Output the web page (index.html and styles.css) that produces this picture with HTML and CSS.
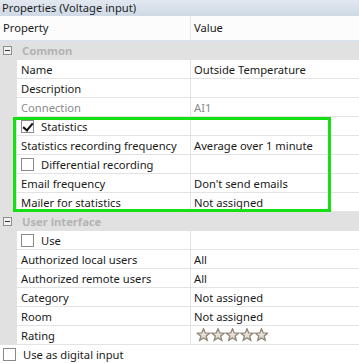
FILE: index.html
```
<!DOCTYPE html>
<html lang="en">

<head>
    <meta charset="utf-8">
    <title>Properties (Voltage input)</title>
    <link rel="stylesheet" href="styles.css">
</head>

<body>
    <!-- title bar -->
    <div class="pane-title">Properties (Voltage input)</div>

    <!-- column headers -->
    <div class="grid-header">
        <div class="grid-header__cell grid-header__cell--name">Property</div>
        <div class="grid-header__cell">Value</div>
    </div>

    <div class="grid">
        <!-- Common -->
        <div class="group">
            <span class="expander"></span>
            <span class="group__label">Common</span>
        </div>
        <div class="row">
            <div class="row__gutter"></div>
            <div class="row__name">Name</div>
            <div class="row__value">Outside Temperature</div>
        </div>
        <div class="row">
            <div class="row__gutter"></div>
            <div class="row__name">Description</div>
            <div class="row__value"></div>
        </div>
        <div class="row row--readonly">
            <div class="row__gutter"></div>
            <div class="row__name">Connection</div>
            <div class="row__value">AI1</div>
        </div>
        <div class="row">
            <div class="row__gutter"></div>
            <div class="row__name"><span class="checkbox checkbox--checked"></span>Statistics</div>
            <div class="row__value"></div>
        </div>
        <div class="row">
            <div class="row__gutter"></div>
            <div class="row__name">Statistics recording frequency</div>
            <div class="row__value">Average over 1 minute</div>
        </div>
        <div class="row">
            <div class="row__gutter"></div>
            <div class="row__name"><span class="checkbox"></span>Differential recording</div>
            <div class="row__value"></div>
        </div>
        <div class="row">
            <div class="row__gutter"></div>
            <div class="row__name">Email frequency</div>
            <div class="row__value">Don't send emails</div>
        </div>
        <div class="row">
            <div class="row__gutter"></div>
            <div class="row__name">Mailer for statistics</div>
            <div class="row__value">Not assigned</div>
        </div>

        <!-- User interface -->
        <div class="group">
            <span class="expander"></span>
            <span class="group__label">User interface</span>
        </div>
        <div class="row">
            <div class="row__gutter"></div>
            <div class="row__name"><span class="checkbox"></span>Use</div>
            <div class="row__value"></div>
        </div>
        <div class="row">
            <div class="row__gutter"></div>
            <div class="row__name">Authorized local users</div>
            <div class="row__value">All</div>
        </div>
        <div class="row">
            <div class="row__gutter"></div>
            <div class="row__name">Authorized remote users</div>
            <div class="row__value">All</div>
        </div>
        <div class="row">
            <div class="row__gutter"></div>
            <div class="row__name">Category</div>
            <div class="row__value">Not assigned</div>
        </div>
        <div class="row">
            <div class="row__gutter"></div>
            <div class="row__name">Room</div>
            <div class="row__value">Not assigned</div>
        </div>
        <div class="row">
            <div class="row__gutter"></div>
            <div class="row__name">Rating</div>
            <div class="row__value rating">
                <svg width="72" height="14" viewBox="0 0 72 14">
                    <defs>
                        <linearGradient id="starFill" x1="0" y1="0" x2="0" y2="1">
                            <stop offset="0" stop-color="#f4f2ee"/>
                            <stop offset="1" stop-color="#d6d0c4"/>
                        </linearGradient>
                        <polygon id="star" points="6.5,0.8 8.2,4.9 12.6,5.2 9.2,8.0 10.3,12.4 6.5,10.0 2.7,12.4 3.8,8.0 0.4,5.2 4.8,4.9"/>
                    </defs>
                    <use href="#star" x="1" fill="url(#starFill)" stroke="#8f8676" stroke-width="1.3"/>
                    <use href="#star" x="15.5" fill="url(#starFill)" stroke="#8f8676" stroke-width="1.3"/>
                    <use href="#star" x="30" fill="url(#starFill)" stroke="#8f8676" stroke-width="1.3"/>
                    <use href="#star" x="44.5" fill="url(#starFill)" stroke="#8f8676" stroke-width="1.3"/>
                    <use href="#star" x="59" fill="url(#starFill)" stroke="#8f8676" stroke-width="1.3"/>
                </svg>
            </div>
        </div>
        <div class="row row--top">
            <div class="row__name row__name--wide"><span class="checkbox"></span>Use as digital input</div>
        </div>

        <!-- highlight frame drawn over the statistics rows -->
        <div class="highlight"></div>
    </div>
</body>

</html>
```

FILE: styles.css
```
/* ===== */
/* Page  */
/* ===== */
* {
    box-sizing: border-box;
}
body {
    margin: 0;
    width: 359px;
    height: 363px;
    overflow: hidden;
    background-color: #ffffff;
    font: normal 11.2px 'Noto Sans', 'Open Sans', sans-serif;
    color: #1a1a1a;
}

/* ========= */
/* Title bar */
/* ========= */
.pane-title {
    height: 16px;
    line-height: 15px;
    padding-left: 2px;
    background: linear-gradient(#e2e8f0, #cfd9e5);
    color: #1e1e1e;
}

/* ============== */
/* Column headers */
/* ============== */
.grid-header {
    display: grid;
    grid-template-columns: 191px 1fr;
    height: 25px;
    background-color: #fcfcfd;
    border-bottom: solid 1px #d5e1f1;
}
.grid-header__cell {
    line-height: 24px;
    padding-left: 3px;
}
.grid-header__cell--name {
    border-right: solid 1px #e6ebf2;
}

/* ==== */
/* Grid */
/* ==== */
.grid {
    position: relative;
}

.group {
    display: flex;
    align-items: center;
    height: 19px;
    background-color: #e1e1e1;
}
.group__label {
    margin-left: 10px;
    font-weight: bold;
    color: #b3b3b3;
}

.expander {
    position: relative;
    width: 9px;
    height: 9px;
    margin-left: 3px;
    border: solid 1px #8e8e8e;
    background-color: #f2f2f2;
}
.expander::after {
    content: '';
    position: absolute;
    left: 1px;
    top: 3px;
    width: 5px;
    height: 1px;
    background-color: #333333;
}

.row {
    display: grid;
    grid-template-columns: 17px 174px 1fr;
    height: 19px;
}
.row__gutter {
    background-color: #e1e1e1;
}
.row__name,
.row__value {
    display: flex;
    align-items: center;
    white-space: nowrap;
    border-bottom: solid 1px #e3e3e3;
    padding-left: 4px;
}
.row__name {
    border-right: solid 1px #e3e3e3;
}
.row__value {
    padding-left: 3px;
}
.row--readonly .row__name,
.row--readonly .row__value {
    color: #8a8a8a;
}
.row--top {
    grid-template-columns: 1fr;
}
.row__name--wide {
    border: none;
    padding-left: 3px;
}

.rating {
    padding-left: 5px;
}

/* ========= */
/* Checkbox  */
/* ========= */
.checkbox {
    position: relative;
    flex: none;
    width: 13px;
    height: 13px;
    margin-right: 7px;
    border: solid 1px #8a8a8a;
    background-color: #ffffff;
}
.checkbox--checked::after {
    content: '';
    position: absolute;
    left: 3px;
    top: 0;
    width: 4px;
    height: 8px;
    border: solid #111111;
    border-width: 0 2px 2px 0;
    transform: rotate(40deg);
}

/* ================ */
/* Highlight frame  */
/* ================ */
.highlight {
    position: absolute;
    left: 13px;
    top: 76px;
    width: 318px;
    height: 95px;
    border: solid 3px #14e014;
    pointer-events: none;
}
```
